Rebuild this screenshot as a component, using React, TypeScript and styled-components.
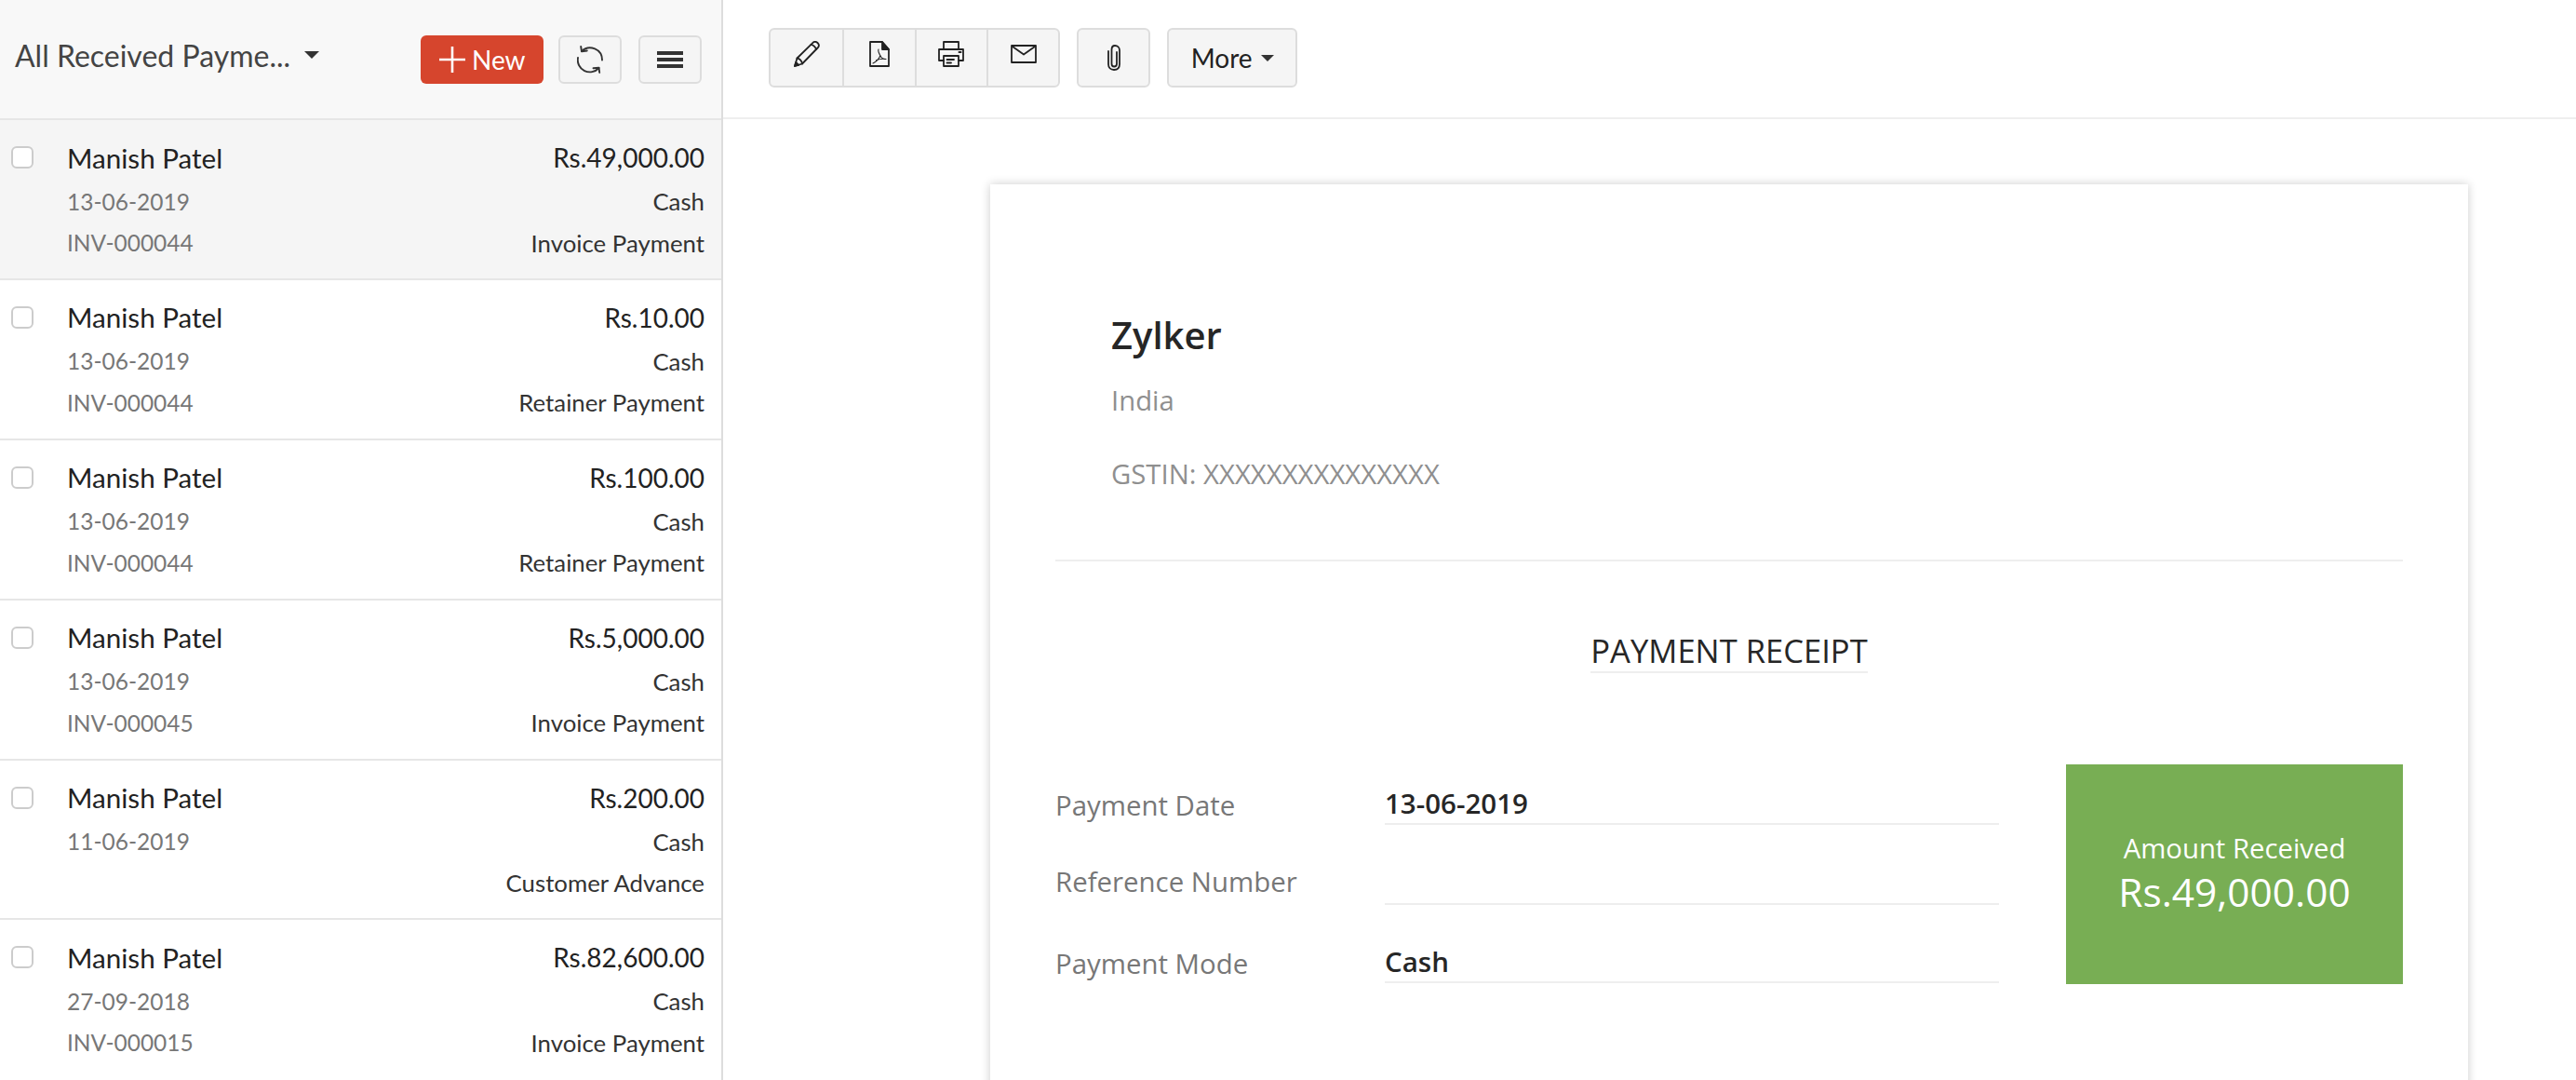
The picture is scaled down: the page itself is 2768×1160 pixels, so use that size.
import React, { FC } from "react";
import styled, { createGlobalStyle } from "styled-components";

const GlobalStyle = createGlobalStyle`
  html, body {
    margin: 0;
    padding: 0;
    background: #fff;
  }
  * {
    box-sizing: border-box;
  }
`;

const Page = styled.div`
  display: flex;
  width: 2768px;
  height: 1160px;
  overflow: hidden;
  font-family: Lato, "Liberation Sans", sans-serif;
  color: #222;
`;

const Sidebar = styled.aside`
  flex: 0 0 777px;
  height: 100%;
  border-right: 2px solid #ddd;
  overflow: hidden;
`;

const SidebarHeader = styled.header`
  display: flex;
  align-items: center;
  height: 127px;
  padding: 0 21px 0 16px;
  background: #f8f8f8;
`;

const ViewTitle = styled.div`
  flex: 1;
  display: flex;
  align-items: center;
  gap: 15px;
  font-size: 32px;
  color: #444;
  margin-top: -9px;
`;

const Caret = styled.span<{ $size?: number }>`
  display: inline-block;
  width: 0;
  height: 0;
  border-left: ${(p) => p.$size ?? 8}px solid transparent;
  border-right: ${(p) => p.$size ?? 8}px solid transparent;
  border-top: ${(p) => p.$size ?? 8}px solid #333;
`;

const NewButton = styled.button`
  display: flex;
  align-items: center;
  gap: 7px;
  width: 132px;
  height: 52px;
  margin-right: 16px;
  padding: 0 0 0 20px;
  border: 0;
  border-radius: 6px;
  background: #d6452d;
  color: #fff;
  font-family: inherit;
  font-size: 28px;
`;

const PlainButton = styled.button<{ $gap?: number }>`
  display: flex;
  align-items: center;
  justify-content: center;
  width: 68px;
  height: 52px;
  margin-right: ${(p) => p.$gap ?? 0}px;
  padding: 0;
  border: 2px solid #ddd;
  border-radius: 6px;
  background: #f5f5f5;
  color: #333;
`;

const PaymentRow = styled.div<{ $active?: boolean }>`
  display: flex;
  height: 171.9px;
  padding: 16px 18px 0 12px;
  border-top: 2px solid #e6e6e6;
  background: ${(p) => (p.$active ? "#f5f5f5" : "#fff")};
`;

const Checkbox = styled.span`
  flex: none;
  width: 24px;
  height: 24px;
  margin: 12px 36px 0 0;
  border: 2px solid #ccc;
  border-radius: 6px;
  background: #fff;
`;

const RowBody = styled.div`
  flex: 1;
  display: grid;
  grid-template-rows: 48px 46px 43px;
`;

const RowLine = styled.div`
  display: flex;
  align-items: center;
  justify-content: space-between;
`;

const PrimaryText = styled.span<{ $size?: number }>`
  font-size: ${(p) => p.$size ?? 29.6}px;
  color: #222;
`;

const MutedText = styled.span`
  font-size: 24.5px;
  color: #777;
`;

const DetailText = styled.span`
  font-size: 25.8px;
  color: #333;
`;

const Main = styled.main`
  flex: 1;
  display: flex;
  flex-direction: column;
  min-width: 0;
`;

const Toolbar = styled.div`
  flex: none;
  display: flex;
  align-items: flex-start;
  height: 128px;
  padding: 30px 0 0 49px;
  border-bottom: 2px solid #eee;
`;

const ToolGroup = styled.div`
  display: flex;
  margin-right: 18px;
  border: 2px solid #ddd;
  border-radius: 6px;
  background: #f5f5f5;
  overflow: hidden;
`;

const ToolButton = styled.button<{ $width?: number; $flush?: boolean }>`
  display: flex;
  align-items: center;
  justify-content: center;
  gap: 9px;
  width: ${(p) => p.$width ?? 77.3}px;
  height: 60px;
  padding: 0 0 ${(p) => (p.$flush ? 0 : 8)}px;
  border: 0;
  border-left: 2px solid #ddd;
  background: transparent;
  color: #222;
  font-family: inherit;
  font-size: 28px;
  &:first-child {
    border-left: 0;
  }
`;

const PaperArea = styled.div`
  flex: 1;
  padding: 70px 0 0 287px;
  overflow: hidden;
`;

const Paper = styled.article`
  width: 1588px;
  height: 1100px;
  padding: 135px 70px 0;
  background: #fff;
  box-shadow: 0 0 10px rgba(0, 0, 0, 0.2);
  font-family: "Open Sans", "Noto Sans", sans-serif;
`;

const Company = styled.div`
  padding: 0 60px;
`;

const CompanyName = styled.div`
  font-size: 40px;
  font-weight: 600;
  line-height: 54px;
  color: #262626;
`;

const CompanyLine = styled.div<{ $top: number }>`
  margin-top: ${(p) => p.$top}px;
  font-size: 29.3px;
  line-height: 38px;
  color: #8f8f8f;
`;

const Divider = styled.hr`
  height: 2px;
  margin: 73px 0 0;
  border: 0;
  background: #eee;
`;

const TitleWrap = styled.div`
  display: flex;
  justify-content: center;
  margin-top: 74px;
`;

const ReceiptTitle = styled.h2`
  margin: 0;
  border-bottom: 2px solid #eee;
  font-size: 34.6px;
  font-weight: 400;
  line-height: 44px;
  color: #262626;
`;

const Details = styled.div`
  display: flex;
  justify-content: space-between;
  margin-top: 98px;
`;

const Fields = styled.div`
  width: 1014px;
  display: grid;
  grid-template-rows: 65px 86px 84px;
`;

const Field = styled.div`
  display: grid;
  grid-template-columns: 354px 1fr;
  align-items: end;
`;

const FieldLabel = styled.div<{ $lift?: number }>`
  padding-bottom: ${(p) => p.$lift ?? 2}px;
  font-size: 29.4px;
  line-height: 38px;
  color: #777;
`;

const FieldValue = styled.div`
  height: 42px;
  border-bottom: 2px solid #eee;
  font-size: 29.5px;
  font-weight: 600;
  line-height: 38px;
  color: #262626;
`;

const AmountBox = styled.div`
  display: flex;
  flex-direction: column;
  align-items: center;
  justify-content: center;
  width: 362px;
  height: 236px;
  background: #78ae54;
  color: #fff;
`;

const AmountLabel = styled.div`
  font-size: 29.3px;
  line-height: 38px;
`;

const AmountValue = styled.div`
  font-size: 42.4px;
  line-height: 56px;
`;

const icon = {
  fill: "none",
  stroke: "currentColor",
  strokeWidth: 1.8,
  strokeLinejoin: "round" as const,
  strokeLinecap: "round" as const,
};

const PlusIcon: FC = () => (
  <svg width="28" height="28" viewBox="0 0 28 28">
    <path d="M14 0v28M0 14h28" stroke="#fff" strokeWidth="2.6" fill="none" />
  </svg>
);

const RefreshIcon: FC = () => (
  <svg width="28" height="30" viewBox="0 0 28 30" {...icon} strokeWidth={1.9}>
    <path d="M5 6A13 13 0 0 1 27 15.500" />
    <path d="M1 13A13 13 0 0 0 23.500 24" />
    <path d="M4.200 1 5 6.300 10.800 5.500" />
    <path d="M24.200 29 23.500 23.700 17.500 24.200" />
  </svg>
);

const MenuIcon: FC = () => (
  <svg width="28" height="18" viewBox="0 0 28 18">
    <path d="M0 0h28v4H0zM0 7h28v4H0zM0 14h28v4H0z" fill="#333" />
  </svg>
);

const PencilIcon: FC = () => (
  <svg width="28" height="28" viewBox="0 0 28 28" {...icon}>
    <path d="M1 27 3.500 18.500 20.500 1.800C22 .5 24 .6 25.500 2 27 3.500 27.300 5.500 26 7L9 24.500Z" />
    <path d="M3.500 18.500C6 18.700 8.700 21.500 9 24.500" />
    <path d="M18.500 3.800C21 4.200 23.800 7 24 9.200" />
    <path d="M1 27 2.200 22.800 5.300 25.800Z" fill="currentColor" />
  </svg>
);

const PdfIcon: FC = () => (
  <svg width="22" height="28" viewBox="0 0 22 28" {...icon}>
    <path d="M1 1H14L21 9V27H1Z" />
    <path d="M14 1 21 9H14Z" fill="currentColor" />
    <path d="M10 9C9 11 11 14 12 16 13 18 15 19.500 18 19.500M12 15.500C11 18 8 22 4 24M7.500 20.800C11 19.500 14 19 17 19.500" strokeWidth="1.100" />
  </svg>
);

const PrinterIcon: FC = () => (
  <svg width="28" height="28" viewBox="0 0 28 28" {...icon}>
    <path d="M6 9V1H22V9" />
    <path d="M6 21H1V9H27V21H22" />
    <path d="M6 16H22V27H6Z" />
    <path d="M9.500 20H17M9.500 23.500H14" />
    <path d="M22.500 12H24.500" strokeWidth="2" />
  </svg>
);

const MailIcon: FC = () => (
  <svg width="28" height="20" viewBox="0 0 28 20" {...icon}>
    <path d="M1 1H27V19H1Z" />
    <path d="M2 2 14 10.500 26 2" />
  </svg>
);

const ClipIcon: FC = () => (
  <svg width="14" height="28" viewBox="0 0 14 28" {...icon}>
    <path d="M10 8V20.500C10 22.500 8.800 23.500 7.200 23.500 5.500 23.500 4.500 22.300 4.500 20.500V5.500C4.500 2.800 5.800 1 8 1 10.800 1 13 3 13 6V21C13 24.800 10.500 27 7 27 3.500 27 1 24.800 1 21V7" />
  </svg>
);

type Payment = {
  amount: string;
  date: string;
  invoice?: string;
  kind: string;
};

const payments: Payment[] = [
  { amount: "Rs.49,000.00", date: "13-06-2019", invoice: "INV-000044", kind: "Invoice Payment" },
  { amount: "Rs.10.00", date: "13-06-2019", invoice: "INV-000044", kind: "Retainer Payment" },
  { amount: "Rs.100.00", date: "13-06-2019", invoice: "INV-000044", kind: "Retainer Payment" },
  { amount: "Rs.5,000.00", date: "13-06-2019", invoice: "INV-000045", kind: "Invoice Payment" },
  { amount: "Rs.200.00", date: "11-06-2019", kind: "Customer Advance" },
  { amount: "Rs.82,600.00", date: "27-09-2018", invoice: "INV-000015", kind: "Invoice Payment" },
];

const App: FC = () => (
  <Page>
    <GlobalStyle />
    <Sidebar>
      <SidebarHeader>
        <ViewTitle>
          All Received Payme...
          <Caret />
        </ViewTitle>
        <NewButton>
          <PlusIcon />
          New
        </NewButton>
        <PlainButton $gap={18}>
          <RefreshIcon />
        </PlainButton>
        <PlainButton>
          <MenuIcon />
        </PlainButton>
      </SidebarHeader>
      {payments.map((payment, index) => (
        <PaymentRow key={index} $active={index === 0}>
          <Checkbox />
          <RowBody>
            <RowLine>
              <PrimaryText>Manish Patel</PrimaryText>
              <PrimaryText $size={28}>{payment.amount}</PrimaryText>
            </RowLine>
            <RowLine>
              <MutedText>{payment.date}</MutedText>
              <DetailText>Cash</DetailText>
            </RowLine>
            <RowLine>
              <MutedText>{payment.invoice}</MutedText>
              <DetailText>{payment.kind}</DetailText>
            </RowLine>
          </RowBody>
        </PaymentRow>
      ))}
    </Sidebar>
    <Main>
      <Toolbar>
        <ToolGroup>
          <ToolButton>
            <PencilIcon />
          </ToolButton>
          <ToolButton>
            <PdfIcon />
          </ToolButton>
          <ToolButton>
            <PrinterIcon />
          </ToolButton>
          <ToolButton>
            <MailIcon />
          </ToolButton>
        </ToolGroup>
        <ToolGroup>
          <ToolButton $width={75} $flush>
            <ClipIcon />
          </ToolButton>
        </ToolGroup>
        <ToolGroup>
          <ToolButton $width={136} $flush>
            More
            <Caret $size={7.5} />
          </ToolButton>
        </ToolGroup>
      </Toolbar>
      <PaperArea>
        <Paper>
          <Company>
            <CompanyName>Zylker</CompanyName>
            <CompanyLine $top={24}>India</CompanyLine>
            <CompanyLine $top={41}>GSTIN: XXXXXXXXXXXXXXX</CompanyLine>
          </Company>
          <Divider />
          <TitleWrap>
            <ReceiptTitle>PAYMENT RECEIPT</ReceiptTitle>
          </TitleWrap>
          <Details>
            <Fields>
              <Field>
                <FieldLabel>Payment Date</FieldLabel>
                <FieldValue>13-06-2019</FieldValue>
              </Field>
              <Field>
                <FieldLabel $lift={6}>Reference Number</FieldLabel>
                <FieldValue />
              </Field>
              <Field>
                <FieldLabel>Payment Mode</FieldLabel>
                <FieldValue>Cash</FieldValue>
              </Field>
            </Fields>
            <AmountBox>
              <AmountLabel>Amount Received</AmountLabel>
              <AmountValue>Rs.49,000.00</AmountValue>
            </AmountBox>
          </Details>
        </Paper>
      </PaperArea>
    </Main>
  </Page>
);

export default App;
